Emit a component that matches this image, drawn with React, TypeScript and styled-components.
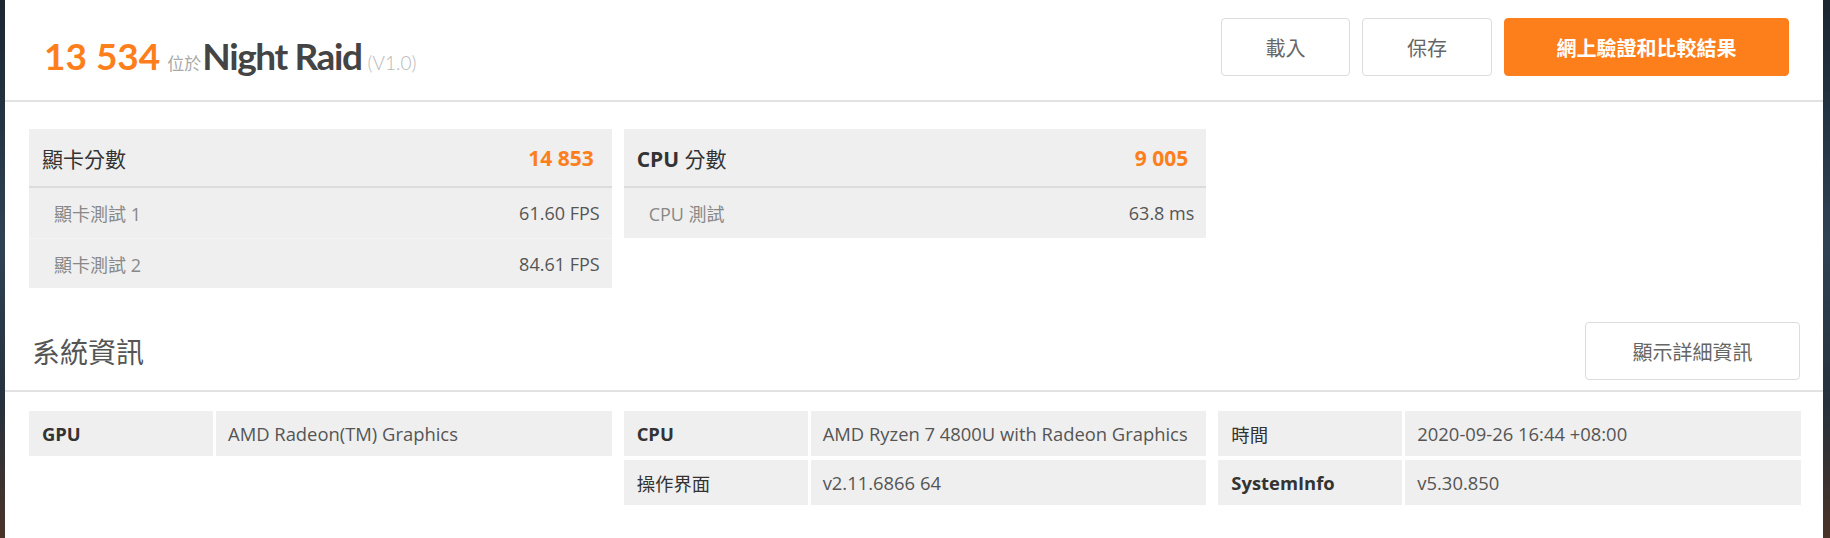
import React from "react";
import styled, { createGlobalStyle } from "styled-components";

const GlobalStyle = createGlobalStyle`
  *, *::before, *::after { box-sizing: border-box; }
  html, body { margin: 0; padding: 0; }
  body {
    background: #1f2a35;
    font-family: "Open Sans", "Noto Sans CJK TC", sans-serif;
  }
`;

const ORANGE = "#fc7f1b";
const CJK = `"Noto Sans CJK TC", "Noto Sans", sans-serif`;
const SANS = `"Open Sans", "Noto Sans CJK TC", sans-serif`;

const Frame = styled.div`
  display: flex;
  width: 1830px;
  height: 538px;
  background: linear-gradient(180deg, #1b2631 0%, #2f4254 45%, #26313c 75%, #4a3328 100%);
  overflow: hidden;
`;

const Sheet = styled.main`
  margin-left: 5px;
  width: 1818px;
  height: 538px;
  background: #fff;
  display: flex;
  flex-direction: column;
`;

const Header = styled.header`
  display: flex;
  justify-content: space-between;
  align-items: flex-start;
  height: 102px;
  padding: 18px 34px 0 39px;
  border-bottom: 2px solid #e2e2e2;
`;

const Title = styled.h1`
  margin: 16px 0 0;
  display: flex;
  align-items: baseline;
  font-family: Lato, "Noto Sans CJK TC", sans-serif;
  font-weight: 400;
  line-height: 1.2;
`;

const BigScore = styled.span`
  font-size: 37px;
  font-weight: 700;
  color: ${ORANGE};
`;

const Prep = styled.span`
  font-family: ${CJK};
  font-size: 17px;
  color: #aaa;
  margin-left: 7px;
`;

const TestName = styled.span`
  font-size: 37px;
  font-weight: 700;
  letter-spacing: -1.4px;
  color: #444;
  margin-left: 1px;
`;

const Version = styled.span`
  font-size: 19px;
  font-weight: 300;
  color: #b9b9b9;
  margin-left: 6px;
`;

const ButtonRow = styled.div`
  display: flex;
  gap: 12px;
`;

const Button = styled.button<{ $w: number; $primary?: boolean }>`
  width: ${(p) => p.$w}px;
  height: 58px;
  border: 1px solid ${(p) => (p.$primary ? ORANGE : "#dcdcdc")};
  border-radius: 4px;
  background: ${(p) => (p.$primary ? ORANGE : "#fff")};
  color: ${(p) => (p.$primary ? "#fff" : "#666")};
  font-family: ${CJK};
  font-size: 20px;
  font-weight: ${(p) => (p.$primary ? 700 : 400)};
  cursor: pointer;
`;

const Body = styled.section`
  padding: 27px 22px 0 24px;
`;

const Grid = styled.div`
  display: grid;
  grid-template-columns: repeat(3, 1fr);
  column-gap: 12px;
  align-items: start;
`;

const ScorePanel = styled.div`
  background: #efefef;
`;

const PanelHead = styled.div`
  display: flex;
  justify-content: space-between;
  align-items: center;
  height: 59px;
  padding: 0 18px 0 13px;
  border-bottom: 2px solid #dcdcdc;
  font-family: ${SANS};
  font-size: 21px;
  color: #333;
`;

const Latin = styled.b`
  font-weight: 700;
`;

const PanelScore = styled.span`
  font-weight: 700;
  color: ${ORANGE};
`;

const SubRow = styled.div`
  display: flex;
  justify-content: space-between;
  align-items: center;
  height: 50px;
  padding: 0 12px 0 25px;
  font-family: ${SANS};
  font-size: 18px;
  & + & {
    border-top: 1px solid #f4f4f4;
  }
`;

const SubLabel = styled.span`
  color: #888;
`;

const SubValue = styled.span`
  color: #555;
`;

const SectionHead = styled.div`
  display: flex;
  justify-content: space-between;
  align-items: center;
  padding: 34px 23px 10px 27px;
  border-bottom: 2px solid #e2e2e2;
`;

const SectionTitle = styled.h2`
  margin: 0;
  font-family: ${CJK};
  font-size: 28px;
  font-weight: 400;
  color: #555;
`;

const InfoBody = styled.section`
  padding: 19px 22px 0 24px;
`;

const InfoList = styled.div`
  display: flex;
  flex-direction: column;
  gap: 4px;
`;

const InfoRow = styled.div`
  display: grid;
  grid-template-columns: 184px 1fr;
  column-gap: 3px;
  height: 45px;
`;

const InfoCell = styled.div<{ $label?: boolean; $bold?: boolean }>`
  display: flex;
  align-items: center;
  background: #efefef;
  padding-left: ${(p) => (p.$label ? 13 : 12)}px;
  font-family: ${SANS};
  font-size: 18.4px;
  font-weight: ${(p) => (p.$bold ? 700 : 400)};
  color: ${(p) => (p.$label ? "#333" : "#555")};
  white-space: nowrap;
`;

type Info = { label: string; value: string; bold?: boolean };

const infoCols: Info[][] = [
  [{ label: "GPU", value: "AMD Radeon(TM) Graphics", bold: true }],
  [
    { label: "CPU", value: "AMD Ryzen 7 4800U with Radeon Graphics", bold: true },
    { label: "操作界面", value: "v2.11.6866 64" },
  ],
  [
    { label: "時間", value: "2020-09-26 16:44 +08:00" },
    { label: "SystemInfo", value: "v5.30.850", bold: true },
  ],
];

export default function App() {
  return (
    <>
      <GlobalStyle />
      <Frame>
        <Sheet>
          <Header>
            <Title>
              <BigScore>13 534</BigScore>
              <Prep>位於</Prep>
              <TestName>Night Raid</TestName>
              <Version>(V1.0)</Version>
            </Title>
            <ButtonRow>
              <Button $w={129}>載入</Button>
              <Button $w={130}>保存</Button>
              <Button $w={285} $primary>
                網上驗證和比較結果
              </Button>
            </ButtonRow>
          </Header>

          <Body>
            <Grid>
              <ScorePanel>
                <PanelHead>
                  <span>顯卡分數</span>
                  <PanelScore>14 853</PanelScore>
                </PanelHead>
                <SubRow>
                  <SubLabel>顯卡測試 1</SubLabel>
                  <SubValue>61.60 FPS</SubValue>
                </SubRow>
                <SubRow>
                  <SubLabel>顯卡測試 2</SubLabel>
                  <SubValue>84.61 FPS</SubValue>
                </SubRow>
              </ScorePanel>
              <ScorePanel>
                <PanelHead>
                  <span>
                    <Latin>CPU</Latin> 分數
                  </span>
                  <PanelScore>9 005</PanelScore>
                </PanelHead>
                <SubRow>
                  <SubLabel>CPU 測試</SubLabel>
                  <SubValue>63.8 ms</SubValue>
                </SubRow>
              </ScorePanel>
            </Grid>
          </Body>

          <SectionHead>
            <SectionTitle>系統資訊</SectionTitle>
            <Button $w={215}>顯示詳細資訊</Button>
          </SectionHead>

          <InfoBody>
            <Grid>
              {infoCols.map((col, i) => (
                <InfoList key={i}>
                  {col.map((r) => (
                    <InfoRow key={r.label}>
                      <InfoCell $label $bold={r.bold}>
                        {r.label}
                      </InfoCell>
                      <InfoCell>{r.value}</InfoCell>
                    </InfoRow>
                  ))}
                </InfoList>
              ))}
            </Grid>
          </InfoBody>
        </Sheet>
      </Frame>
    </>
  );
}
